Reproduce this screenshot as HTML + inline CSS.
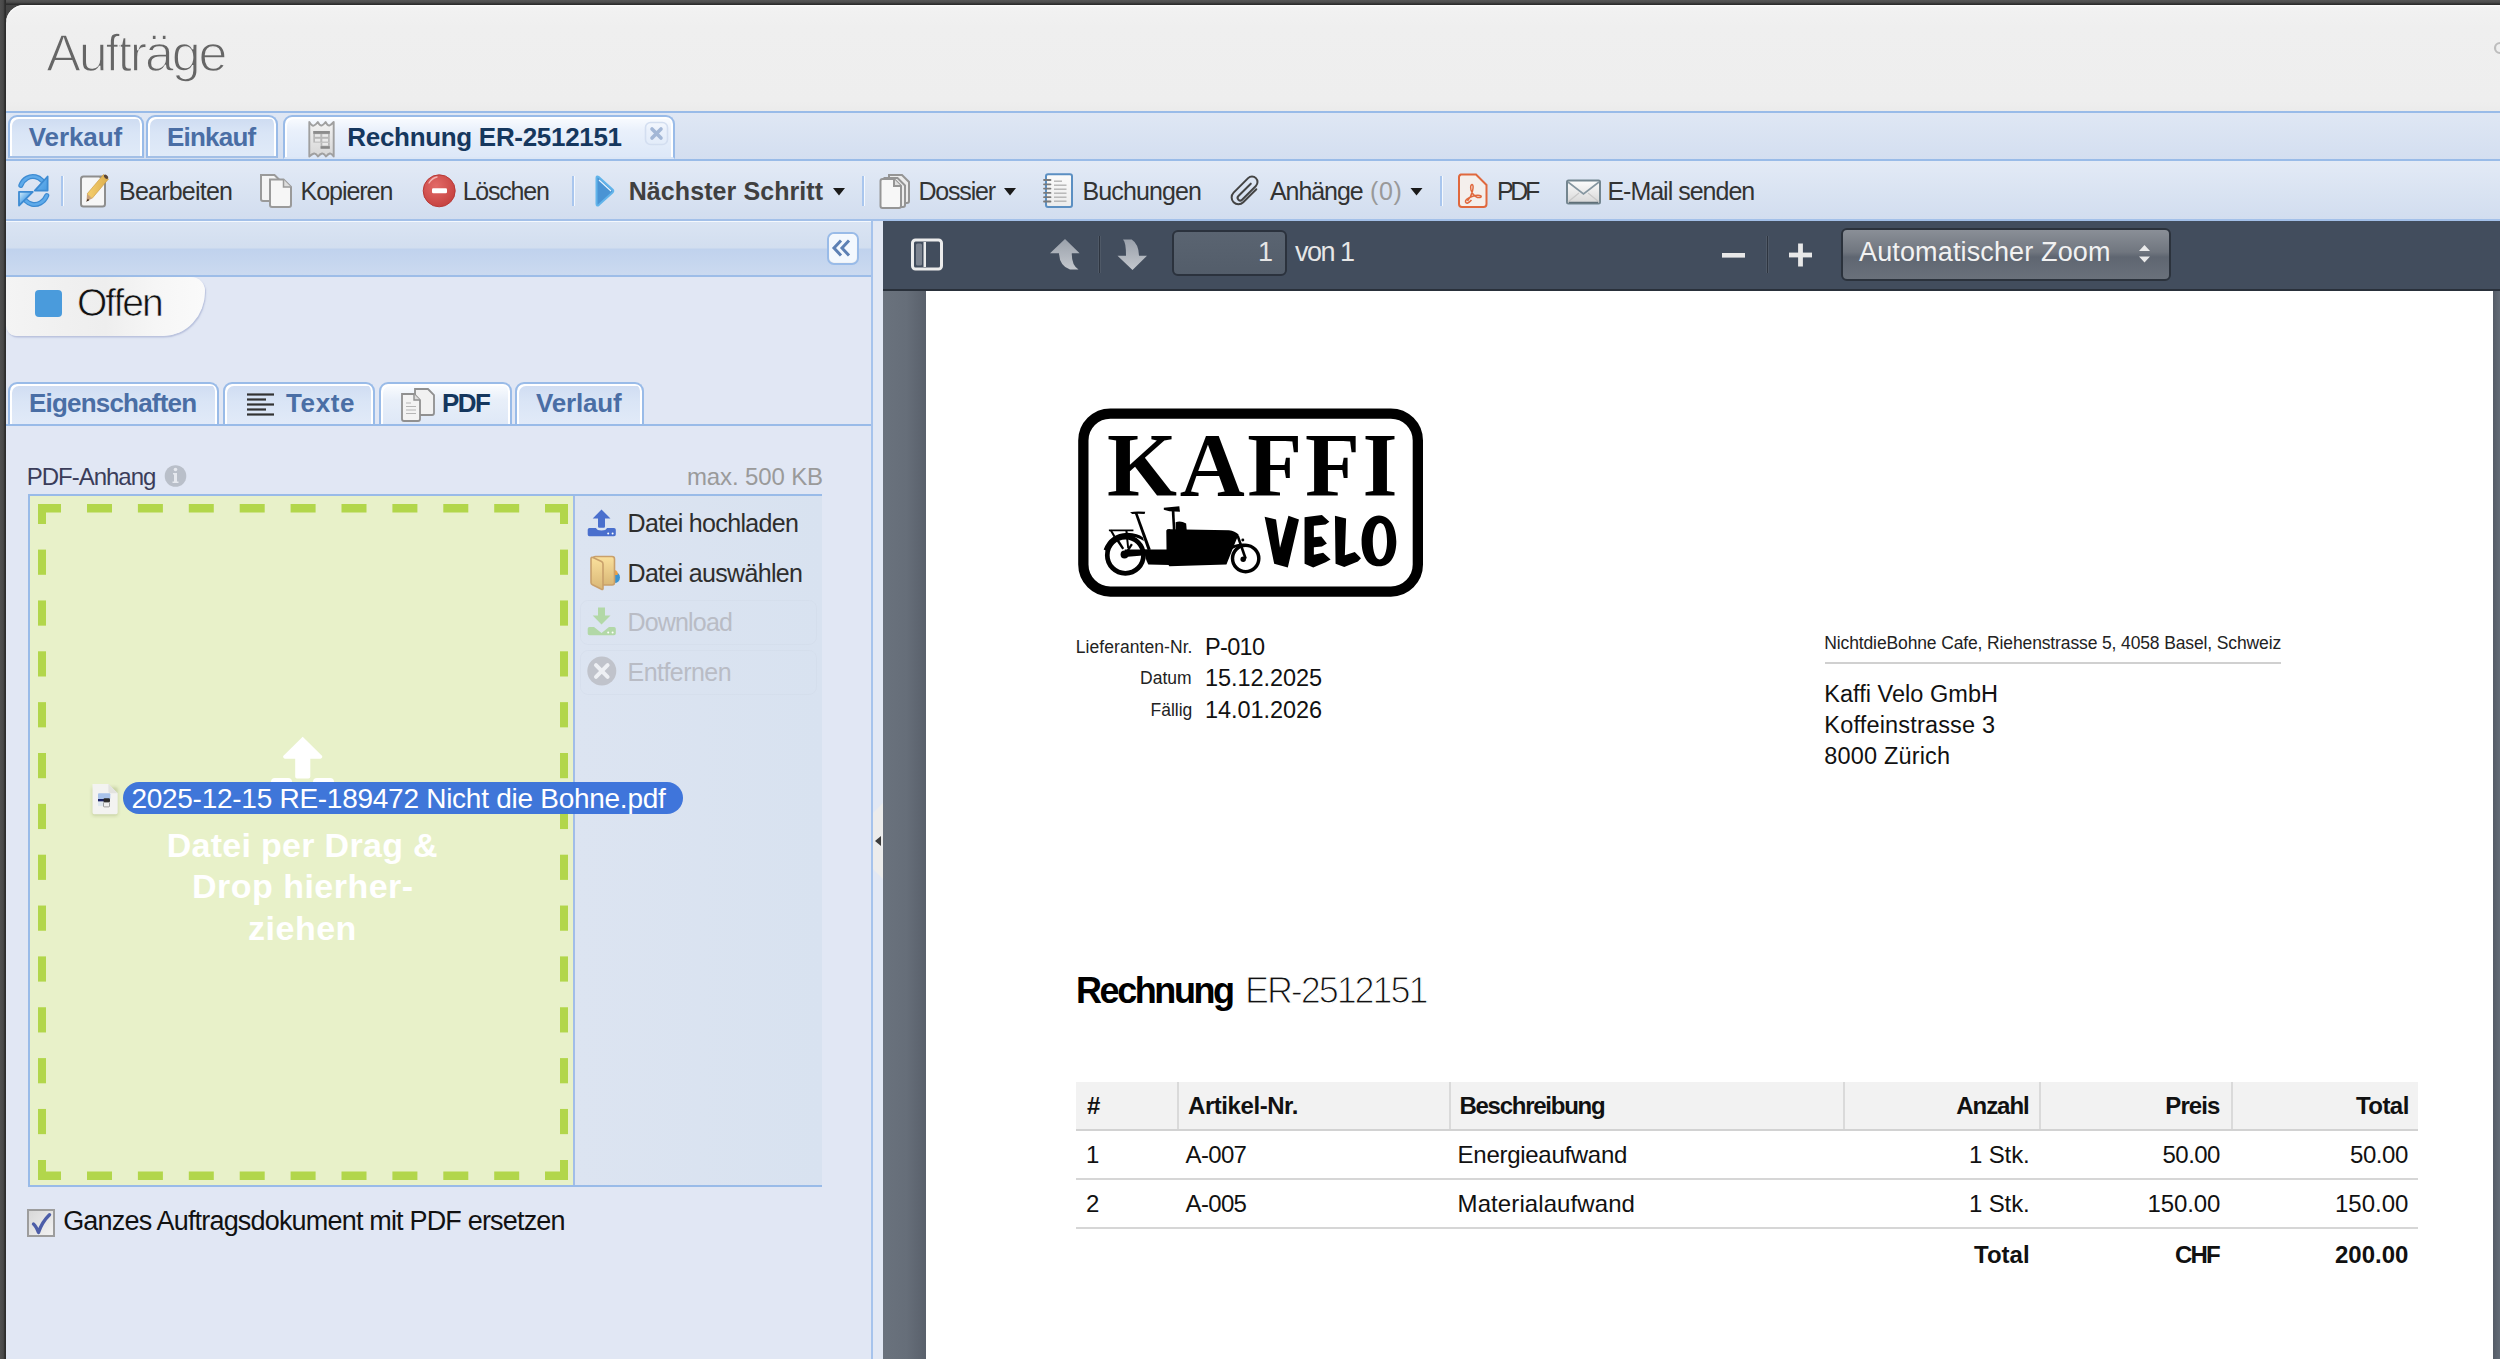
<!DOCTYPE html>
<html><head><meta charset="utf-8"><title>Aufträge</title>
<style>
html,body{margin:0;padding:0;width:2500px;height:1359px;overflow:hidden;background:#454545;}
.a{position:absolute;box-sizing:border-box;}
.t{position:absolute;white-space:nowrap;line-height:1;}
svg{position:absolute;overflow:visible;}
</style></head><body>
<div class="a" style="left:0px;top:0px;width:2500px;height:5px;background:linear-gradient(#555,#4d4d4d 45%,#2f2f2f 80%,#2a2a2a)"></div>
<div class="a" style="left:0px;top:0px;width:6px;height:1359px;background:linear-gradient(90deg,#505050,#484848 55%,#2e2e2e 80%,#2a2a2a)"></div>
<div class="a" style="left:6px;top:5px;width:2494px;height:107px;background:linear-gradient(#f2f2f2,#efefef 20%,#eeeeee 90%,#ebebeb);border-top-left-radius:18px;box-shadow:inset 0 1.5px 0 #fafafa"></div>
<svg style="left:2488px;top:40px" width="12" height="16"><path d="M12 3 A5 5 0 0 0 12 13" fill="none" stroke="#bdbdbd" stroke-width="2.2"/></svg>
<div class="a" style="left:6px;top:111px;width:2494px;height:50px;background:linear-gradient(#dfe7f4,#d3def0);border-top:2px solid #99bbe8"></div>
<div class="a" style="left:6px;top:159px;width:2494px;height:2px;background:#99bbe8"></div>
<div class="a" style="left:8px;top:115px;width:136px;height:43px;background:linear-gradient(#cddbf1,#d9e5f6 40%,#e0eaf8);border:2px solid #99bbe8;border-bottom:2px solid #a3bfe6;border-radius:9px 9px 0 0;box-shadow:inset 2px 2px 0 #fff,inset -2px 0 0 #fff"></div>
<div class="a" style="left:146px;top:115px;width:132px;height:43px;background:linear-gradient(#cddbf1,#d9e5f6 40%,#e0eaf8);border:2px solid #99bbe8;border-bottom:2px solid #a3bfe6;border-radius:9px 9px 0 0;box-shadow:inset 2px 2px 0 #fff,inset -2px 0 0 #fff"></div>
<div class="a" style="left:283px;top:115px;width:392px;height:44px;background:linear-gradient(#fafcff,#e9f0fb 35%,#dde8f8);border:2px solid #99bbe8;border-bottom:2px solid #dbe6f6;border-radius:9px 9px 0 0;box-shadow:inset 2px 2px 0 #fff,inset -2px 0 0 #fff"></div>
<div class="a" style="left:6px;top:161px;width:2494px;height:60px;background:linear-gradient(#e3eaf6,#d9e3f2 55%,#d2ddef);border-bottom:2px solid #a3c0e9"></div>
<div class="a" style="left:61px;top:176px;width:2px;height:30px;background:#a9c6ee"></div>
<div class="a" style="left:63px;top:176px;width:1px;height:30px;background:#f4f8fd"></div>
<div class="a" style="left:571.5px;top:176px;width:2px;height:30px;background:#a9c6ee"></div>
<div class="a" style="left:573.5px;top:176px;width:1px;height:30px;background:#f4f8fd"></div>
<div class="a" style="left:862px;top:176px;width:2px;height:30px;background:#a9c6ee"></div>
<div class="a" style="left:864px;top:176px;width:1px;height:30px;background:#f4f8fd"></div>
<div class="a" style="left:1439.5px;top:176px;width:2px;height:30px;background:#a9c6ee"></div>
<div class="a" style="left:1441.5px;top:176px;width:1px;height:30px;background:#f4f8fd"></div>
<div class="a" style="left:6px;top:221px;width:867px;height:1138px;background:#e1e7f4"></div>
<div class="a" style="left:6px;top:221px;width:865px;height:56px;background:linear-gradient(#dae4f3,#d2deef 49%,#c0d2ed 51%,#cbdaf0);border-top:1.5px solid #f4f8fd;border-bottom:2px solid #9dbde8"></div>
<div class="a" style="left:871px;top:221px;width:2px;height:1138px;background:#a6c3ec"></div>
<div class="a" style="left:873px;top:221px;width:10px;height:1138px;background:#e2e8f4"></div>
<svg style="left:873px;top:803px" width="10" height="76"><path d="M10 0 V76 L0 66 V10 Z" fill="#ececec"/><path d="M8 33 V43 L2 38 Z" fill="#3c3c3c"/></svg>
<div class="a" style="left:6px;top:277px;width:199px;height:59px;background:linear-gradient(90deg,#f4f4f4 0%,#f0f0f0 30%,#eeeeee 50%,#f6f6f6 75%,#fafafa 100%);box-shadow:1px 1.5px 1.5px rgba(150,160,200,0.55);border-radius:0 16px 48px 12px / 0 16px 52px 12px"></div>
<div class="a" style="left:35px;top:290px;width:27px;height:27px;background:#4a9bdc;border-radius:4px"></div>
<div class="a" style="left:6px;top:424px;width:865px;height:2px;background:#99bbe8"></div>
<div class="a" style="left:8px;top:382px;width:211px;height:42px;background:linear-gradient(#cfdcf2,#dae5f6 45%,#e1eaf8);border:2px solid #99bbe8;border-bottom:none;border-radius:9px 9px 0 0;box-shadow:inset 2px 2px 0 #fff,inset -2px 0 0 #fff"></div>
<div class="a" style="left:223px;top:382px;width:152px;height:42px;background:linear-gradient(#cfdcf2,#dae5f6 45%,#e1eaf8);border:2px solid #99bbe8;border-bottom:none;border-radius:9px 9px 0 0;box-shadow:inset 2px 2px 0 #fff,inset -2px 0 0 #fff"></div>
<div class="a" style="left:379px;top:382px;width:133px;height:42px;background:linear-gradient(#fbfdff,#e8eff9 40%,#dee8f7);border:2px solid #99bbe8;border-bottom:none;border-radius:9px 9px 0 0;box-shadow:inset 2px 2px 0 #fff,inset -2px 0 0 #fff"></div>
<div class="a" style="left:515px;top:382px;width:129px;height:42px;background:linear-gradient(#cfdcf2,#dae5f6 45%,#e1eaf8);border:2px solid #99bbe8;border-bottom:none;border-radius:9px 9px 0 0;box-shadow:inset 2px 2px 0 #fff,inset -2px 0 0 #fff"></div>
<div class="a" style="left:28px;top:494px;width:794px;height:2px;background:#99bbe8"></div>
<div class="a" style="left:28px;top:494px;width:2px;height:693px;background:#99bbe8"></div>
<div class="a" style="left:28px;top:1185px;width:794px;height:2px;background:#99bbe8"></div>
<div class="a" style="left:30px;top:496px;width:543px;height:689px;background:#e8f1c9"></div>
<div class="a" style="left:573px;top:496px;width:2px;height:689px;background:#a1bde8"></div>
<div class="a" style="left:575px;top:496px;width:247px;height:689px;background:linear-gradient(90deg,#dce4f1,#d8e2f0)"></div>
<div class="a" style="left:580px;top:600px;width:237px;height:45px;border:1px solid rgba(205,214,230,0.35);border-radius:8px"></div>
<div class="a" style="left:580px;top:650px;width:237px;height:45px;border:1px solid rgba(205,214,230,0.35);border-radius:8px"></div>
<svg style="left:0;top:0" width="2500" height="1359"><rect x="38.00" y="504.00" width="23" height="8.5" fill="#b2d64b"/><rect x="545.00" y="504.00" width="23" height="8.5" fill="#b2d64b"/><rect x="87.00" y="504.00" width="25" height="8.5" fill="#b2d64b"/><rect x="137.90" y="504.00" width="25" height="8.5" fill="#b2d64b"/><rect x="188.80" y="504.00" width="25" height="8.5" fill="#b2d64b"/><rect x="239.70" y="504.00" width="25" height="8.5" fill="#b2d64b"/><rect x="290.60" y="504.00" width="25" height="8.5" fill="#b2d64b"/><rect x="341.50" y="504.00" width="25" height="8.5" fill="#b2d64b"/><rect x="392.40" y="504.00" width="25" height="8.5" fill="#b2d64b"/><rect x="443.30" y="504.00" width="25" height="8.5" fill="#b2d64b"/><rect x="494.20" y="504.00" width="25" height="8.5" fill="#b2d64b"/><rect x="38.00" y="1171.50" width="23" height="8.5" fill="#b2d64b"/><rect x="545.00" y="1171.50" width="23" height="8.5" fill="#b2d64b"/><rect x="87.00" y="1171.50" width="25" height="8.5" fill="#b2d64b"/><rect x="137.90" y="1171.50" width="25" height="8.5" fill="#b2d64b"/><rect x="188.80" y="1171.50" width="25" height="8.5" fill="#b2d64b"/><rect x="239.70" y="1171.50" width="25" height="8.5" fill="#b2d64b"/><rect x="290.60" y="1171.50" width="25" height="8.5" fill="#b2d64b"/><rect x="341.50" y="1171.50" width="25" height="8.5" fill="#b2d64b"/><rect x="392.40" y="1171.50" width="25" height="8.5" fill="#b2d64b"/><rect x="443.30" y="1171.50" width="25" height="8.5" fill="#b2d64b"/><rect x="494.20" y="1171.50" width="25" height="8.5" fill="#b2d64b"/><rect x="38.00" y="504.00" width="8" height="20" fill="#b2d64b"/><rect x="38.00" y="1160.00" width="8" height="20" fill="#b2d64b"/><rect x="38.00" y="549.60" width="8" height="25.2" fill="#b2d64b"/><rect x="38.00" y="600.45" width="8" height="25.2" fill="#b2d64b"/><rect x="38.00" y="651.30" width="8" height="25.2" fill="#b2d64b"/><rect x="38.00" y="702.15" width="8" height="25.2" fill="#b2d64b"/><rect x="38.00" y="753.00" width="8" height="25.2" fill="#b2d64b"/><rect x="38.00" y="803.85" width="8" height="25.2" fill="#b2d64b"/><rect x="38.00" y="854.70" width="8" height="25.2" fill="#b2d64b"/><rect x="38.00" y="905.55" width="8" height="25.2" fill="#b2d64b"/><rect x="38.00" y="956.40" width="8" height="25.2" fill="#b2d64b"/><rect x="38.00" y="1007.25" width="8" height="25.2" fill="#b2d64b"/><rect x="38.00" y="1058.10" width="8" height="25.2" fill="#b2d64b"/><rect x="38.00" y="1108.95" width="8" height="25.2" fill="#b2d64b"/><rect x="560.00" y="504.00" width="8" height="20" fill="#b2d64b"/><rect x="560.00" y="1160.00" width="8" height="20" fill="#b2d64b"/><rect x="560.00" y="549.60" width="8" height="25.2" fill="#b2d64b"/><rect x="560.00" y="600.45" width="8" height="25.2" fill="#b2d64b"/><rect x="560.00" y="651.30" width="8" height="25.2" fill="#b2d64b"/><rect x="560.00" y="702.15" width="8" height="25.2" fill="#b2d64b"/><rect x="560.00" y="753.00" width="8" height="25.2" fill="#b2d64b"/><rect x="560.00" y="803.85" width="8" height="25.2" fill="#b2d64b"/><rect x="560.00" y="854.70" width="8" height="25.2" fill="#b2d64b"/><rect x="560.00" y="905.55" width="8" height="25.2" fill="#b2d64b"/><rect x="560.00" y="956.40" width="8" height="25.2" fill="#b2d64b"/><rect x="560.00" y="1007.25" width="8" height="25.2" fill="#b2d64b"/><rect x="560.00" y="1058.10" width="8" height="25.2" fill="#b2d64b"/><rect x="560.00" y="1108.95" width="8" height="25.2" fill="#b2d64b"/></svg>
<div class="a" style="left:27px;top:1209px;width:28px;height:28px;background:linear-gradient(135deg,#d8d8d8,#f2f2f2);border:2px solid #9d9d9d"></div>
<div class="a" style="left:883px;top:221px;width:1617px;height:1138px;background:#646c77"></div>
<div class="a" style="left:883px;top:291px;width:43px;height:1068px;background:linear-gradient(90deg,#6a727d,#666e79 55%,#59606b)"></div>
<div class="a" style="left:2493px;top:291px;width:7px;height:1068px;background:linear-gradient(90deg,#555c67,#646c77)"></div>
<div class="a" style="left:883px;top:221px;width:1617px;height:70px;background:#424d5d;border-bottom:2px solid #29303a"></div>
<div class="a" style="left:926px;top:291px;width:1567px;height:1068px;background:#fff"></div>
<div class="a" style="left:1098px;top:236px;width:3px;height:37px;background:#2e3540;border-left:1px solid #4f5967;border-right:1px solid #4f5967"></div>
<div class="a" style="left:1766px;top:236px;width:3px;height:37px;background:#2e3540;border-left:1px solid #4f5967;border-right:1px solid #4f5967"></div>
<div class="a" style="left:1172px;top:230px;width:115px;height:46px;background:linear-gradient(#5a6471,#535d6a);border:2px solid #2b323d;border-radius:6px"></div>
<div class="a" style="left:1841px;top:228px;width:330px;height:53px;background:linear-gradient(#8a8f97,#70767f 45%,#5f6671 55%,#6a717b);border:2px solid #2b323c;border-radius:6px"></div>
<div class="a" style="left:1076px;top:1082px;width:1342px;height:48px;background:#f2f2f2"></div>
<div class="a" style="left:1076px;top:1129px;width:1342px;height:2px;background:#d2d2d2"></div>
<div class="a" style="left:1176.5px;top:1082px;width:2px;height:47px;background:#dadada"></div>
<div class="a" style="left:1448.5px;top:1082px;width:2px;height:47px;background:#dadada"></div>
<div class="a" style="left:1842.5px;top:1082px;width:2px;height:47px;background:#dadada"></div>
<div class="a" style="left:2038.5px;top:1082px;width:2px;height:47px;background:#dadada"></div>
<div class="a" style="left:2230.5px;top:1082px;width:2px;height:47px;background:#dadada"></div>
<div class="a" style="left:1076px;top:1178px;width:1342px;height:2px;background:#d6d6d6"></div>
<div class="a" style="left:1076px;top:1227px;width:1342px;height:2px;background:#d6d6d6"></div>
<div class="a" style="left:1825px;top:662px;width:456px;height:2px;background:#d0d0d0"></div>
<svg style="left:0;top:0" width="2500" height="1359"><defs>
<linearGradient id="gBlue" x1="0" y1="0" x2="1" y2="1"><stop offset="0" stop-color="#d8f0fb"/><stop offset="0.5" stop-color="#5eaaea"/><stop offset="1" stop-color="#4a9be0"/></linearGradient>
<linearGradient id="gPage" x1="0" y1="0" x2="0" y2="1"><stop offset="0" stop-color="#fbfbfb"/><stop offset="1" stop-color="#ececec"/></linearGradient>
<linearGradient id="gPencil" x1="0" y1="0" x2="1" y2="0"><stop offset="0" stop-color="#f6cf6c"/><stop offset="1" stop-color="#dcae4e"/></linearGradient>
<radialGradient id="gRed" cx="0.4" cy="0.35" r="0.7"><stop offset="0" stop-color="#e26a67"/><stop offset="1" stop-color="#c5403e"/></radialGradient>
<linearGradient id="gFolder" x1="0" y1="0" x2="0" y2="1"><stop offset="0" stop-color="#fae09c"/><stop offset="1" stop-color="#d9b777"/></linearGradient>
<linearGradient id="gEnv" x1="0" y1="0" x2="0" y2="1"><stop offset="0" stop-color="#fdfdfd"/><stop offset="1" stop-color="#d6d6d6"/></linearGradient>
<linearGradient id="gArrow" x1="0" y1="0" x2="0" y2="1"><stop offset="0" stop-color="#9aa1ab"/><stop offset="1" stop-color="#c3c7cd"/></linearGradient>
</defs>
<g stroke-linecap="round" stroke-linejoin="round" fill="none"><path d="M20.8 185.5 C23.5 178.5 30 175.5 35.5 176.8 C38.5 177.5 40.5 179 42 180.5" stroke="#3d8bd2" stroke-width="5"/><path d="M20.8 185.5 C23.5 178.5 30 175.5 35.5 176.8 C38.5 177.5 40.5 179 42 180.5" stroke="#5eaaea" stroke-width="2.6"/><path d="M46.8 195.5 C44 202.5 37.5 205.5 32 204.2 C29 203.5 27 202 25.5 200.5" stroke="#3d8bd2" stroke-width="5"/><path d="M46.8 195.5 C44 202.5 37.5 205.5 32 204.2 C29 203.5 27 202 25.5 200.5" stroke="#5eaaea" stroke-width="2.6"/></g><path d="M47.6 176.5 L47.6 190.6 L34.8 190.6 Z" fill="url(#gBlue)" stroke="#3d8bd2" stroke-width="1.8" stroke-linejoin="round"/><path d="M19 191.8 L19 205.6 L32.8 191.8 Z" fill="url(#gBlue)" stroke="#3d8bd2" stroke-width="1.8" stroke-linejoin="round"/>
<rect x="81" y="176.5" width="24" height="30" rx="2.5" fill="#f6f6f6" stroke="#8e8e8e" stroke-width="2"/><path d="M98 176 L105 183 L105 176 Z" fill="#8e8e8e"/><path d="M103.5 174.5 L108.5 179 L92 198.5 L87 194 Z" fill="url(#gPencil)" stroke="#c9953a" stroke-width="0.6"/><path d="M87 194 L92 198.5 L86.5 201.5 Z" fill="#caa27a"/><path d="M87.8 198.8 L89.3 200.2 L86.2 201.7 Z" fill="#3a2a20"/><ellipse cx="106" cy="176.8" rx="2.6" ry="1.6" transform="rotate(42 106 176.8)" fill="#5b4636"/>
<path d="M261 175 H274.5 L279 179.5 V199 a2 2 0 0 1 -2 2 H263 a2 2 0 0 1 -2 -2 Z" fill="#f4f4f4" stroke="#9a9a9a" stroke-width="2"/><path d="M270 179.5 H283.5 L291 187 V205 a2 2 0 0 1 -2 2 H272 a2 2 0 0 1 -2 -2 Z" fill="#f6f6f6" stroke="#9a9a9a" stroke-width="2"/><path d="M283.5 179.5 V187 H291" fill="#ddd" stroke="#9a9a9a" stroke-width="1.5"/>
<circle cx="439.2" cy="190.8" r="16" fill="url(#gRed)" stroke="#b83936" stroke-width="1"/><rect x="432" y="188.3" width="15" height="5" rx="1.2" fill="#fff"/><path d="M429 183 Q432 178 437 177" stroke="#f4b5b3" stroke-width="1.4" fill="none" stroke-linecap="round"/>
<path d="M596.5 178 Q596.5 175.5 599 177.2 L612.5 189.5 Q614 191 612.5 192.5 L599 204.8 Q596.5 206.5 596.5 204 Z" fill="#4a94d4" stroke="#62b4ea" stroke-width="2"/><path d="M599 180 L611 191" stroke="#e8f6ff" stroke-width="1.2"/>
<path d="M833 188 H845 L839 195.5 Z" fill="#1a1a1a"/>
<path d="M1004 188 H1016 L1010 195.5 Z" fill="#1a1a1a"/>
<path d="M1410.5 188 H1422.5 L1416.5 195.5 Z" fill="#1a1a1a"/>
<g stroke="#959595" stroke-width="2" fill="#ececec"><path d="M889 175 H902 L909 182 V201 a2 2 0 0 1 -2 2 H889 Z"/><path d="M884.5 178 H897.5 L905 185.5 V205 a2 2 0 0 1 -2 2 H884.5 Z"/><path d="M880.5 181 a2 2 0 0 1 2 -2 H894 L901 186 V206 a2 2 0 0 1 -2 2 H882.5 a2 2 0 0 1 -2 -2 Z" fill="#f7f7f7"/><path d="M894 179 V186 H901" fill="#dedede"/></g>
<rect x="1046" y="174.2" width="26" height="32.8" rx="2" fill="url(#gPage)" stroke="#5b8fc2" stroke-width="2"/><g stroke="#7a7a7a" stroke-width="1.8" stroke-linecap="round"><path d="M1044 180 H1050.5"/><path d="M1044 184.3 H1050.5"/><path d="M1044 188.6 H1050.5"/><path d="M1044 192.9 H1050.5"/><path d="M1044 197.2 H1050.5"/><path d="M1044 201.5 H1050.5"/></g><g stroke="#b4b4b4" stroke-width="1.4"><path d="M1054 181.2 H1062"/><path d="M1054 185.2 H1066.5"/><path d="M1054 189.2 H1066.5"/><path d="M1054 193.2 H1066.5"/><path d="M1054 197.2 H1066.5"/><path d="M1054 201.2 H1066.5"/></g>
<g transform="translate(1245 190.6) rotate(45)" fill="none" stroke="#444" stroke-width="2" stroke-linecap="round"><path d="M7 -9 V9.5 A6.8 6.8 0 0 1 -6.6 9.5 V-11 A5.5 5.5 0 0 1 4.4 -11 V8.5 A2.6 2.6 0 0 1 -0.8 8.5 V-9"/></g>
<path d="M1461 174.5 H1476 L1486.5 185 V204 a3 3 0 0 1 -3 3 H1462 a3 3 0 0 1 -3 -3 V177.5 a3 3 0 0 1 2 -3 Z" fill="#f4efec" stroke="#e0683d" stroke-width="2"/><path d="M1471.5 200 Q1467 205 1465.5 202 Q1465 199 1472 196.5 Q1478 194.5 1481 196 Q1482 198 1477.5 197.5 Q1473 196 1471 190 Q1470 185 1472 184.5 Q1474 185 1472.5 191 Q1471.5 196 1467.5 201" fill="none" stroke="#e0683d" stroke-width="1.5"/>
<rect x="1567" y="180.5" width="33" height="23" rx="1.5" fill="url(#gEnv)" stroke="#73858f" stroke-width="2"/><path d="M1568 182 L1583.5 194 L1599 182" fill="none" stroke="#8596a0" stroke-width="1.6"/><path d="M1568 202 L1579 193 M1599 202 L1588 193" fill="none" stroke="#c9c9c9" stroke-width="1.2"/><path d="M1569 202.5 H1598" stroke="#5f6f78" stroke-width="1.5"/>
<linearGradient id="gRcpt" x1="0" y1="0" x2="0" y2="1"><stop offset="0" stop-color="#f3f3f3"/><stop offset="1" stop-color="#d6d6d6"/></linearGradient><path d="M309.3 122 Q312 126.5 314 125.5 Q316 124.5 317.8 122 Q319.8 126 321.8 125.5 Q323.8 124.5 325.6 122 Q327.6 126 329.5 125.5 Q331.5 124.5 333.7 122 V156.5 Q331.5 153 329.8 153.5 Q328 154 326 156.5 Q324 153 322 153.5 Q320 154 318 156.5 Q316 153 314 153.5 Q312 154 309.3 156.5 Z" fill="url(#gRcpt)" stroke="#a0a0a0" stroke-width="1.9" stroke-linejoin="round"/><rect x="313.3" y="131" width="16.5" height="11.6" fill="#b8b8b8"/><rect x="320.6" y="142.6" width="9.2" height="6" fill="#b8b8b8"/><rect x="313.3" y="131" width="16.5" height="2.8" fill="#8c8c8c"/><g fill="#e9e9e9"><rect x="315" y="134.2" width="5.3" height="2.6"/><rect x="322.3" y="134.2" width="5.7" height="2.6"/><rect x="315" y="138.8" width="5.3" height="2.8"/><rect x="322.3" y="138.8" width="5.7" height="2.8"/><rect x="322.3" y="143" width="5.7" height="2.6"/></g><rect x="320.6" y="146.2" width="9.2" height="2.5" fill="#888"/>
<rect x="645.5" y="122.5" width="22" height="22" rx="5" fill="none" stroke="#d3def0" stroke-width="1.6"/><path d="M652 129 L661 138 M661 129 L652 138" stroke="#a3b7d6" stroke-width="3.6" stroke-linecap="round"/>
<rect x="828" y="233" width="30" height="31" rx="6" fill="url(#gPage)" stroke="#99bbe8" stroke-width="2"/><rect x="829.5" y="234.5" width="27" height="28" rx="5" fill="#f3f8fe"/><path d="M841 240.5 L834 248 L841 255.5 M849 240.5 L842 248 L849 255.5" fill="none" stroke="#5d80b4" stroke-width="3"/>
<g stroke="#333" stroke-width="2.2"><path d="M247 394.5 H274"/><path d="M247 399.5 H266"/><path d="M247 404.5 H274"/><path d="M247 409.5 H266"/><path d="M247 414.5 H274"/></g>
<path d="M415 389 H428 L434 395 V413 a2 2 0 0 1 -2 2 H417 a2 2 0 0 1 -2 -2 Z" fill="#f1f1f1" stroke="#909090" stroke-width="1.8"/><path d="M402 394 H414 L420 400 V419 a2 2 0 0 1 -2 2 H404 a2 2 0 0 1 -2 -2 Z" fill="#f3f3f3" stroke="#909090" stroke-width="1.8"/><path d="M414 394 V400 H420" fill="#ddd" stroke="#909090" stroke-width="1.4"/><g stroke="#b5b5b5" stroke-width="1.2"><path d="M406 403 H411 M406 406.5 H416 M406 410 H416 M406 413.5 H416"/></g>
<circle cx="175.5" cy="476" r="10.8" fill="#b9bfc9"/><circle cx="175.5" cy="469.5" r="1.8" fill="#e6e9ef"/><path d="M173 473 H177 V481.5 H178.5 V483 H172.5 V481.5 H174 V474.5 H173 Z" fill="#e6e9ef"/>
<path d="M601.5 509.6 L610.5 518.4 H605 V526.5 a1.2 1.2 0 0 1 -1.2 1.2 H599.2 a1.2 1.2 0 0 1 -1.2 -1.2 V518.4 H592.7 Z" fill="#4a6fcd"/><path d="M589.5 528 H596 Q597 530.5 601.5 530.5 Q606 530.5 607 528 H614 a1.8 1.8 0 0 1 1.8 1.8 V534.5 a1.8 1.8 0 0 1 -1.8 1.8 H589.5 a1.8 1.8 0 0 1 -1.8 -1.8 V529.8 a1.8 1.8 0 0 1 1.8 -1.8 Z" fill="#4a6fcd"/><circle cx="608.2" cy="533.4" r="1" fill="#fff"/><circle cx="612.6" cy="533.4" r="1" fill="#fff"/>
<path d="M614.5 572 a3 3 0 0 1 0 11" fill="#3b93d0"/><path d="M614.5 570 a3.5 3.5 0 0 1 3 5 L614.5 575 Z" fill="#f0a040"/><rect x="593" y="556.5" width="21.5" height="28.5" rx="2.5" fill="url(#gFolder)" stroke="#c9a06b" stroke-width="1.6"/><path d="M591 558.5 Q591 556.8 593 557.6 L601.5 561.5 Q603 562.2 603 564 V588.5 Q603 590 601.5 589.3 L592.5 584.8 Q591 584 591 582.5 Z" fill="url(#gFolder)" stroke="#c9a06b" stroke-width="1.6"/>
<path d="M598 607.5 H605 V615.5 H610.5 L601.5 624.5 L592.7 615.5 H598 Z" fill="#b2d8a7"/><path d="M589.5 627 H594 L601.5 633 L609 627 H614 a1.8 1.8 0 0 1 1.8 1.8 V633.5 a1.8 1.8 0 0 1 -1.8 1.8 H589.5 a1.8 1.8 0 0 1 -1.8 -1.8 V628.8 a1.8 1.8 0 0 1 1.8 -1.8 Z" fill="#b2d8a7"/><circle cx="608.2" cy="632.4" r="1" fill="#fff"/><circle cx="612.6" cy="632.4" r="1" fill="#fff"/>
<circle cx="601.8" cy="671" r="14.5" fill="#c0c3cb"/><path d="M596 665.2 L607.6 676.8 M607.6 665.2 L596 676.8" stroke="#eef0f4" stroke-width="4" stroke-linecap="round"/>
<path d="M33.5 1224 Q36 1226 38.5 1232.5 Q42 1222 49.5 1214.8" fill="none" stroke="#4d5ea8" stroke-width="3.4" stroke-linecap="round" stroke-linejoin="round"/>
<path d="M302.7 736.7 L321.7 755.6 a1.8 1.8 0 0 1 -1.3 3.1 H310.3 V776.7 a1.8 1.8 0 0 1 -1.8 1.8 H297 a1.8 1.8 0 0 1 -1.8 -1.8 V758.7 H285 a1.8 1.8 0 0 1 -1.3 -3.1 Z" fill="#fff"/><rect x="271" y="778" width="21" height="8" rx="4" fill="#fff"/><rect x="313" y="778" width="21" height="8" rx="4" fill="#fff"/>
<defs><filter id="fsh" x="-50%" y="-50%" width="200%" height="200%"><feGaussianBlur stdDeviation="1.8"/></filter></defs><rect x="92" y="787" width="26" height="29" rx="2" fill="rgba(60,70,20,0.18)" filter="url(#fsh)"/><path d="M92.5 784 H108.4 L117.7 793.2 V812.4 a1.8 1.8 0 0 1 -1.8 1.8 H94.3 a1.8 1.8 0 0 1 -1.8 -1.8 Z" fill="#f3f3f1"/><path d="M108.4 784 V791.5 a1.7 1.7 0 0 0 1.7 1.7 H117.7 Z" fill="#e3e3e0"/><rect x="98" y="793.3" width="12.3" height="6" rx="1" fill="#a8c2ea"/><rect x="98" y="799" width="7" height="2.6" fill="#1c2366"/><rect x="103.5" y="798.3" width="6.5" height="4" rx="1.2" fill="#2a2a2a"/><rect x="98" y="801.6" width="5.5" height="4.5" fill="#dfe8ef"/><rect x="103.5" y="802.3" width="6" height="4.6" rx="0.8" fill="#eeeeee" stroke="#666" stroke-width="0.6"/>
<rect x="912.5" y="240" width="29" height="29" rx="3" fill="none" stroke="#ececec" stroke-width="3"/><rect x="916" y="243.5" width="6" height="22" rx="1.5" fill="#7c838f"/><rect x="923.5" y="242" width="2.5" height="25" fill="#ececec"/>
<path d="M1065 239 L1079.6 253.3 H1071.8 Q1071.5 265 1078.5 269.5 H1070 Q1059.5 266 1059 253.3 H1050 Z" fill="url(#gArrow)"/>
<path d="M1132.5 270 L1147 255.7 H1139 Q1138.7 244 1131.7 239.5 H1123 Q1126 242 1126 255.7 H1117.5 Z" fill="url(#gArrow)"/>
<rect x="1722" y="253" width="23" height="4.6" fill="#e8e8e8"/>
<rect x="1789" y="252.6" width="23" height="4.8" fill="#e8e8e8"/><rect x="1798.1" y="243.5" width="4.8" height="23" fill="#e8e8e8"/>
<path d="M2139 251 L2144.5 245 L2150 251 Z M2139 256.5 L2144.5 262.5 L2150 256.5 Z" fill="#eaeaea"/></svg>
<svg style="left:0;top:0" width="2500" height="1359"><rect x="1083.35" y="413.55" width="334.5" height="178" rx="27" fill="none" stroke="#000" stroke-width="10.3"/><g transform="translate(1095 500) scale(0.124)" fill="#000"><circle cx="245" cy="445" r="146" fill="none" stroke="#000" stroke-width="38"/><circle cx="238" cy="440" r="32"/><path d="M70 400 Q120 270 260 265 Q350 270 385 300 L395 330 Q330 290 250 295 Q130 300 90 410 Z"/><path d="M112 238 H310 V252 H112 Z"/><path d="M120 245 L150 300 L165 292 L135 240 Z"/><path d="M245 250 L260 390 L275 390 L262 250 Z"/><path d="M160 310 L220 400 L235 390 L180 300 Z"/><path d="M290 350 L240 430 L255 440 L305 360 Z"/><path d="M283 98 Q330 88 405 95 L400 112 Q350 108 300 112 Z"/><path d="M320 105 L342 105 L450 400 L425 405 Z"/><path d="M240 400 L590 400 L600 450 L410 445 L240 460 Z"/><path d="M400 400 L600 420 L600 525 L430 520 Q400 470 400 400 Z"/><path d="M575 245 Q580 232 610 235 L1080 243 Q1130 250 1158 278 L1130 345 L1060 520 L600 535 L578 505 Z"/><path d="M650 180 Q690 165 735 190 L740 245 L650 245 Z"/><path d="M618 75 L640 75 L648 245 L628 245 Z"/><path d="M555 62 L680 50 L685 95 L600 90 L555 78 Z"/><path d="M1140 290 L1160 285 L1225 470 L1205 478 Z"/><circle cx="1215" cy="472" r="106" fill="none" stroke="#000" stroke-width="28"/><circle cx="1195" cy="478" r="22"/><circle cx="1192" cy="322" r="12"/><path d="M1090 380 Q1150 340 1240 355 L1245 370 Q1150 365 1100 400 Z"/><path d="M1368 135 L1460 158 L1492 385 L1560 128 L1645 158 L1555 545 L1445 515 Z"/><path d="M1690 140 L1830 120 L1890 175 L1860 198 L1765 208 L1765 300 L1825 295 L1870 350 L1830 375 L1765 382 L1765 442 L1840 425 L1900 480 L1860 502 L1760 545 L1690 515 Z"/><path d="M1935 128 L2025 150 L2015 445 L2095 420 L2145 470 L2120 495 L2010 540 L1940 515 Z"/><path fill-rule="evenodd" d="M2290 125 C2390 125 2430 240 2430 335 C2430 440 2390 535 2290 535 C2190 535 2150 440 2150 335 C2150 240 2190 125 2290 125 Z M2300 185 C2260 185 2240 260 2240 335 C2240 410 2260 480 2295 480 C2335 480 2355 410 2355 335 C2355 260 2340 185 2300 185 Z"/></g></svg>
<div class="a" style="left:123px;top:782px;width:560px;height:32px;background:rgba(56,112,218,0.96);border-radius:16px"></div>
<div class="t" style="left:46.20px;top:27.38px;font:300 52px/1 'Liberation Sans',sans-serif;letter-spacing:-2.208px;color:#666;-webkit-text-stroke:1.4px #efefef">Aufträge</div>
<div class="t" style="left:28.70px;top:123.99px;font:700 26px/1 'Liberation Sans',sans-serif;letter-spacing:-0.081px;color:#4a6ea5;">Verkauf</div>
<div class="t" style="left:167.00px;top:123.99px;font:700 26px/1 'Liberation Sans',sans-serif;letter-spacing:-0.792px;color:#4a6ea5;">Einkauf</div>
<div class="t" style="left:347.30px;top:124.39px;font:700 26px/1 'Liberation Sans',sans-serif;letter-spacing:-0.309px;color:#15375e;">Rechnung ER-2512151</div>
<div class="t" style="left:119.00px;top:178.64px;font:400 25px/1 'Liberation Sans',sans-serif;letter-spacing:-0.780px;color:#333;">Bearbeiten</div>
<div class="t" style="left:300.60px;top:178.64px;font:400 25px/1 'Liberation Sans',sans-serif;letter-spacing:-1.053px;color:#333;">Kopieren</div>
<div class="t" style="left:462.70px;top:178.64px;font:400 25px/1 'Liberation Sans',sans-serif;letter-spacing:-1.219px;color:#333;">Löschen</div>
<div class="t" style="left:628.70px;top:178.64px;font:700 25px/1 'Liberation Sans',sans-serif;letter-spacing:0.087px;color:#404040;">Nächster Schritt</div>
<div class="t" style="left:918.40px;top:178.64px;font:400 25px/1 'Liberation Sans',sans-serif;letter-spacing:-1.169px;color:#333;">Dossier</div>
<div class="t" style="left:1082.60px;top:178.64px;font:400 25px/1 'Liberation Sans',sans-serif;letter-spacing:-0.900px;color:#333;">Buchungen</div>
<div class="t" style="left:1270.00px;top:178.64px;font:400 25px/1 'Liberation Sans',sans-serif;letter-spacing:-1.082px;color:#333;">Anhänge</div>
<div class="t" style="left:1370.00px;top:178.64px;font:400 25px/1 'Liberation Sans',sans-serif;letter-spacing:0.635px;color:#999;">(0)</div>
<div class="t" style="left:1497.00px;top:178.64px;font:400 25px/1 'Liberation Sans',sans-serif;letter-spacing:-3.365px;color:#333;">PDF</div>
<div class="t" style="left:1607.40px;top:178.64px;font:400 25px/1 'Liberation Sans',sans-serif;letter-spacing:-1.000px;color:#333;">E-Mail senden</div>
<div class="t" style="left:77.00px;top:282.99px;font:300 39px/1 'Liberation Sans',sans-serif;letter-spacing:-1.998px;color:#111;-webkit-text-stroke:0.7px #f1f1f1">Offen</div>
<div class="t" style="left:29.00px;top:389.89px;font:700 26px/1 'Liberation Sans',sans-serif;letter-spacing:-0.802px;color:#4a6ea5;">Eigenschaften</div>
<div class="t" style="left:286.00px;top:389.89px;font:700 26px/1 'Liberation Sans',sans-serif;letter-spacing:0.617px;color:#4a6ea5;">Texte</div>
<div class="t" style="left:442.00px;top:389.89px;font:700 26px/1 'Liberation Sans',sans-serif;letter-spacing:-1.559px;color:#15375e;">PDF</div>
<div class="t" style="left:536.00px;top:389.89px;font:700 26px/1 'Liberation Sans',sans-serif;letter-spacing:-0.175px;color:#4a6ea5;">Verlauf</div>
<div class="t" style="left:26.80px;top:464.68px;font:400 24px/1 'Liberation Sans',sans-serif;letter-spacing:-1.021px;color:#3b3d5a;">PDF-Anhang</div>
<div class="t" style="left:687.00px;top:465.18px;font:400 24px/1 'Liberation Sans',sans-serif;letter-spacing:-0.139px;color:#9a9a9a;">max. 500 KB</div>
<div class="t" style="left:627.50px;top:510.54px;font:400 25px/1 'Liberation Sans',sans-serif;letter-spacing:-0.663px;color:#2e2e2e;">Datei hochladen</div>
<div class="t" style="left:627.50px;top:560.84px;font:400 25px/1 'Liberation Sans',sans-serif;letter-spacing:-0.674px;color:#2e2e2e;">Datei auswählen</div>
<div class="t" style="left:627.50px;top:610.24px;font:400 25px/1 'Liberation Sans',sans-serif;letter-spacing:-0.825px;color:#b9bcc5;">Download</div>
<div class="t" style="left:627.50px;top:659.74px;font:400 25px/1 'Liberation Sans',sans-serif;letter-spacing:-0.538px;color:#b9bcc5;">Entfernen</div>
<div class="t" style="left:63.20px;top:1207.94px;font:400 27px/1 'Liberation Sans',sans-serif;letter-spacing:-0.818px;color:#111;">Ganzes Auftragsdokument mit PDF ersetzen</div>
<div class="t" style="left:166.70px;top:827.82px;font:700 34px/1 'Liberation Sans',sans-serif;letter-spacing:0.297px;color:#fff;">Datei per Drag &amp;</div>
<div class="t" style="left:192.00px;top:869.22px;font:700 34px/1 'Liberation Sans',sans-serif;letter-spacing:0.481px;color:#fff;">Drop hierher-</div>
<div class="t" style="left:248.00px;top:910.62px;font:700 34px/1 'Liberation Sans',sans-serif;letter-spacing:0.513px;color:#fff;">ziehen</div>
<div class="t" style="left:1258.00px;top:239.14px;font:400 27px/1 'Liberation Sans',sans-serif;letter-spacing:0.000px;color:#e6e6e6;">1</div>
<div class="t" style="left:1295.00px;top:239.14px;font:400 27px/1 'Liberation Sans',sans-serif;letter-spacing:-1.508px;color:#e6e6e6;">von 1</div>
<div class="t" style="left:1859.00px;top:239.14px;font:400 27px/1 'Liberation Sans',sans-serif;letter-spacing:0.141px;color:#f2f2f2;">Automatischer Zoom</div>
<div class="t" style="left:1075.80px;top:638.89px;font:400 17.5px/1 'Liberation Sans',sans-serif;letter-spacing:0.065px;color:#222;">Lieferanten-Nr.</div>
<div class="t" style="left:1140.03px;top:670.29px;font:400 17.5px/1 'Liberation Sans',sans-serif;letter-spacing:0.000px;color:#222;">Datum</div>
<div class="t" style="left:1150.51px;top:701.59px;font:400 17.5px/1 'Liberation Sans',sans-serif;letter-spacing:0.000px;color:#222;">Fällig</div>
<div class="t" style="left:1205.00px;top:635.81px;font:400 23.5px/1 'Liberation Sans',sans-serif;letter-spacing:-0.660px;color:#111;">P-010</div>
<div class="t" style="left:1205.00px;top:667.41px;font:400 23.5px/1 'Liberation Sans',sans-serif;letter-spacing:-0.061px;color:#111;">15.12.2025</div>
<div class="t" style="left:1205.00px;top:698.81px;font:400 23.5px/1 'Liberation Sans',sans-serif;letter-spacing:-0.061px;color:#111;">14.01.2026</div>
<div class="t" style="left:1824.30px;top:635.29px;font:400 17.5px/1 'Liberation Sans',sans-serif;letter-spacing:-0.130px;color:#222;">NichtdieBohne Cafe, Riehenstrasse 5, 4058 Basel, Schweiz</div>
<div class="t" style="left:1824.30px;top:682.81px;font:400 23.5px/1 'Liberation Sans',sans-serif;letter-spacing:0.027px;color:#111;">Kaffi Velo GmbH</div>
<div class="t" style="left:1824.30px;top:714.11px;font:400 23.5px/1 'Liberation Sans',sans-serif;letter-spacing:0.179px;color:#111;">Koffeinstrasse 3</div>
<div class="t" style="left:1824.30px;top:745.41px;font:400 23.5px/1 'Liberation Sans',sans-serif;letter-spacing:0.167px;color:#111;">8000 Zürich</div>
<div class="t" style="left:1076.00px;top:972.63px;font:700 36px/1 'Liberation Sans',sans-serif;letter-spacing:-2.429px;color:#000;">Rechnung</div>
<div class="t" style="left:1245.00px;top:972.63px;font:300 36px/1 'Liberation Sans',sans-serif;letter-spacing:-2.081px;color:#111;-webkit-text-stroke:1.1px #fff">ER-2512151</div>
<div class="t" style="left:1087.00px;top:1094.08px;font:700 24px/1 'Liberation Sans',sans-serif;letter-spacing:0.000px;color:#111;">#</div>
<div class="t" style="left:1188.00px;top:1094.08px;font:700 24px/1 'Liberation Sans',sans-serif;letter-spacing:-0.434px;color:#111;">Artikel-Nr.</div>
<div class="t" style="left:1459.40px;top:1094.08px;font:700 24px/1 'Liberation Sans',sans-serif;letter-spacing:-1.252px;color:#111;">Beschreibung</div>
<div class="t" style="left:1956.30px;top:1094.08px;font:700 24px/1 'Liberation Sans',sans-serif;letter-spacing:-1.060px;color:#111;">Anzahl</div>
<div class="t" style="left:2165.30px;top:1094.08px;font:700 24px/1 'Liberation Sans',sans-serif;letter-spacing:-0.916px;color:#111;">Preis</div>
<div class="t" style="left:2355.90px;top:1094.08px;font:700 24px/1 'Liberation Sans',sans-serif;letter-spacing:-0.520px;color:#111;">Total</div>
<div class="t" style="left:1086.00px;top:1142.78px;font:400 24px/1 'Liberation Sans',sans-serif;letter-spacing:0.000px;color:#111;">1</div>
<div class="t" style="left:1185.60px;top:1142.78px;font:400 24px/1 'Liberation Sans',sans-serif;letter-spacing:-0.674px;color:#111;">A-007</div>
<div class="t" style="left:1457.60px;top:1142.78px;font:400 24px/1 'Liberation Sans',sans-serif;letter-spacing:-0.286px;color:#111;">Energieaufwand</div>
<div class="t" style="left:1969.00px;top:1142.78px;font:400 24px/1 'Liberation Sans',sans-serif;letter-spacing:-0.138px;color:#111;">1 Stk.</div>
<div class="t" style="left:2162.60px;top:1142.78px;font:400 24px/1 'Liberation Sans',sans-serif;letter-spacing:-0.578px;color:#111;">50.00</div>
<div class="t" style="left:2350.00px;top:1142.78px;font:400 24px/1 'Liberation Sans',sans-serif;letter-spacing:-0.428px;color:#111;">50.00</div>
<div class="t" style="left:1086.00px;top:1191.78px;font:400 24px/1 'Liberation Sans',sans-serif;letter-spacing:0.000px;color:#111;">2</div>
<div class="t" style="left:1185.60px;top:1191.78px;font:400 24px/1 'Liberation Sans',sans-serif;letter-spacing:-0.674px;color:#111;">A-005</div>
<div class="t" style="left:1457.60px;top:1191.78px;font:400 24px/1 'Liberation Sans',sans-serif;letter-spacing:0.089px;color:#111;">Materialaufwand</div>
<div class="t" style="left:1969.00px;top:1191.78px;font:400 24px/1 'Liberation Sans',sans-serif;letter-spacing:-0.138px;color:#111;">1 Stk.</div>
<div class="t" style="left:2147.60px;top:1191.78px;font:400 24px/1 'Liberation Sans',sans-serif;letter-spacing:-0.132px;color:#111;">150.00</div>
<div class="t" style="left:2335.00px;top:1191.78px;font:400 24px/1 'Liberation Sans',sans-serif;letter-spacing:-0.012px;color:#111;">150.00</div>
<div class="t" style="left:1974.00px;top:1243.18px;font:700 24px/1 'Liberation Sans',sans-serif;letter-spacing:0.030px;color:#111;">Total</div>
<div class="t" style="left:2175.00px;top:1243.18px;font:700 24px/1 'Liberation Sans',sans-serif;letter-spacing:-1.832px;color:#111;">CHF</div>
<div class="t" style="left:2335.00px;top:1243.18px;font:700 24px/1 'Liberation Sans',sans-serif;letter-spacing:-0.012px;color:#111;">200.00</div>
<div class="t" style="left:131.40px;top:785.30px;font:400 28px/1 'Liberation Sans',sans-serif;letter-spacing:-0.268px;color:#fff;">2025-12-15 RE-189472 Nicht die Bohne.pdf</div>
<div class="t" style="left:1107.00px;top:420.93px;font:700 90px/1 'Liberation Serif',sans-serif;letter-spacing:2.662px;color:#000;">KAFFI</div>
</body></html>
